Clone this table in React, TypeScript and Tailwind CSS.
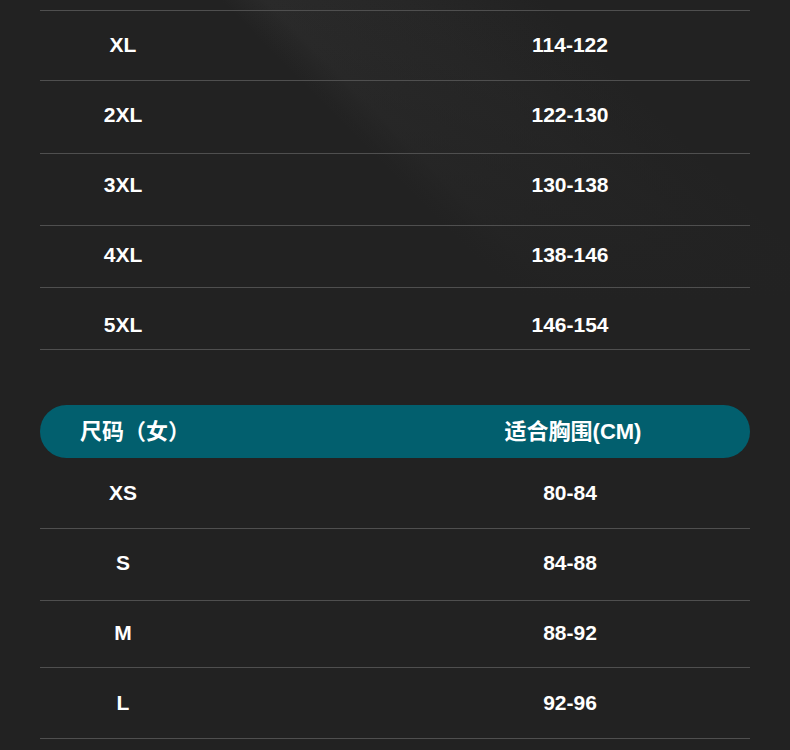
const men = [
  { size: "XL", chest: "114-122", h: "h-[70px]", pt: "pt-[22px]" },
  { size: "2XL", chest: "122-130", h: "h-[73px]", pt: "pt-[22px]" },
  { size: "3XL", chest: "130-138", h: "h-[72px]", pt: "pt-[19px]" },
  { size: "4XL", chest: "138-146", h: "h-[62px]", pt: "pt-[17px]" },
  { size: "5XL", chest: "146-154", h: "h-[62px]", pt: "pt-[25px]" },
];

const women = [
  { size: "XS", chest: "80-84", h: "h-[71px]", pt: "pt-[23px]" },
  { size: "S", chest: "84-88", h: "h-[72px]", pt: "pt-[22px]" },
  { size: "M", chest: "88-92", h: "h-[67px]", pt: "pt-[20px]" },
  { size: "L", chest: "92-96", h: "h-[71px]", pt: "pt-[23px]" },
];

type Row = { size: string; chest: string; h: string; pt: string };

function SizeRow({ row }: { row: Row }) {
  return (
    <div className={`flex border-b border-[#4f4f4f] ${row.h} ${row.pt}`}>
      <div className="w-[166px] text-center">{row.size}</div>
      <div className="ml-auto w-[360px] text-center">{row.chest}</div>
    </div>
  );
}

export default function App() {
  return (
    <div className="w-[790px] h-[750px] overflow-hidden bg-[#222222] bg-[linear-gradient(to_bottom,transparent_0px,#222222_300px),linear-gradient(45deg,#222222_63%,#2a2a2a_66%,#272727_75%,#222222_84%)] px-[40px] pt-[10px] font-['Liberation_Sans','Noto_Sans_CJK_SC',sans-serif] text-[21px] leading-[24px] font-bold text-white">
      {/* Men's table */}
      <div className="border-t border-[#4f4f4f]">
        {men.map((r) => (
          <SizeRow key={r.size} row={r} />
        ))}
      </div>

      {/* Women's header */}
      <div className="mt-[55px] flex h-[53px] items-center rounded-full bg-[#025f6e] text-[22px]">
        <div className="pl-[40px]">尺码（女）</div>
        <div className="ml-auto w-[354px] text-center">适合胸围(CM)</div>
      </div>

      {/* Women's table */}
      <div>
        {women.map((r) => (
          <SizeRow key={r.size} row={r} />
        ))}
      </div>
    </div>
  );
}
